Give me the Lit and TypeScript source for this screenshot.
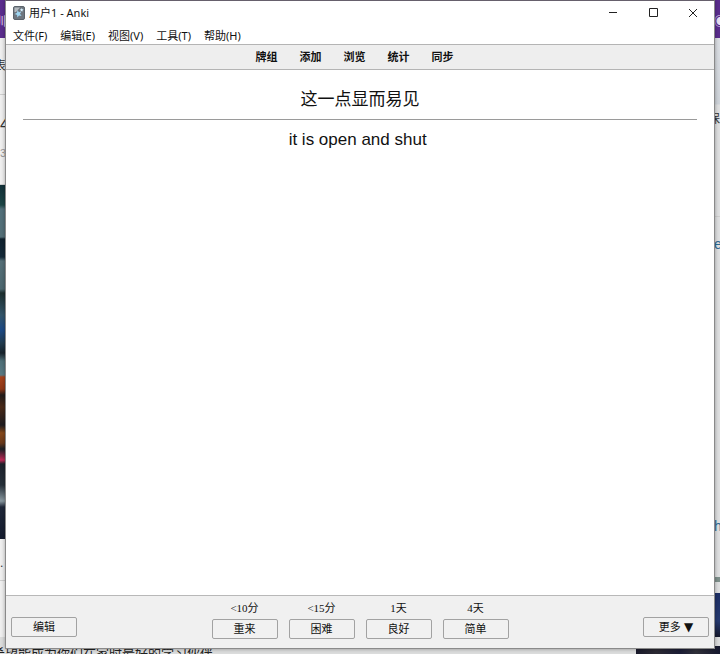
import { LitElement, html, css } from "lit";
import { customElement, property } from "lit/decorators.js";

@customElement("app-backdrop")
export class AppBackdrop extends LitElement {
  static styles = css`
    :host {
      display: block;
      position: absolute;
      inset: 0;
      overflow: hidden;
      background: #dcdddd;
      font-family: "Liberation Sans", "Noto Sans CJK SC", sans-serif;
      white-space: nowrap;
    }
    .columns {
      display: flex;
      justify-content: space-between;
    }
    .strip {
      width: 6px;
      overflow: hidden;
      display: flex;
      flex-direction: column;
      color: #333;
      font-size: 12px;
      line-height: 16px;
    }
    .left {
      background: #f0f0f0;
    }
    .right {
      background: #dfe0e1;
    }
    .brand {
      height: 38px;
      box-sizing: border-box;
      padding-top: 14px;
      background: #5b2d8e;
      color: #e8dff2;
    }
    .tail {
      display: flex;
      justify-content: flex-end;
    }
    .row {
      box-sizing: border-box;
      border-bottom: 1px solid #cfcfcf;
    }
    .nav {
      height: 57px;
      padding-top: 20px;
    }
    .heading {
      height: 90px;
      padding-top: 22px;
      font-size: 17px;
    }
    .muted {
      margin-top: 12px;
      font-size: 11px;
      color: #999;
    }
    .photo {
      height: 354px;
      background: linear-gradient(
        #123038 0, #1d4747 20px, #52707a 24px, #557078 52px, #10222e 54px,
        #142a3a 72px, #567078 76px, #4d6870 104px, #1d3030 108px, #33566a 130px,
        #1c4a86 145px, #223c50 158px, #17232c 168px, #4f7078 176px, #5a7a84 190px,
        #a8431c 192px, #8f3716 204px, #231d1c 210px, #4a2a18 222px, #1e1c20 240px,
        #86491b 248px, #6a3a1c 258px, #1b2026 264px, #c22a58 275px, #1d222c 279px,
        #26303a 300px, #8b9aa2 316px, #20283a 322px, #141c2e 354px
      );
    }
    .below {
      padding-top: 16px;
      height: 42px;
    }
    .rail {
      height: 179px;
      padding-top: 73px;
      background: linear-gradient(#dcdfe4 0, #cfd4da 66px, #dfe0e1 67px);
    }
    .link {
      color: #2c6a96;
      font-size: 14px;
    }
    .gap-a {
      padding-top: 19px;
    }
    .gap-b {
      padding-top: 266px;
      height: 59px;
    }
    .bar {
      height: 5px;
      background: #7f918c;
    }
    .poster {
      margin-top: 11px;
      height: 44px;
      background: linear-gradient(#1d2f66, #263a70 28px, #15182c);
    }
    .footer {
      position: absolute;
      inset: auto 0 0 0;
      height: 8px;
      display: flex;
      justify-content: space-between;
      overflow: hidden;
      font-size: 13px;
      line-height: 16px;
      color: #222;
    }
    .footer-text {
      margin-left: -8px;
    }
    .thumb {
      width: 84px;
      background: linear-gradient(90deg, #1a1a2c, #2c2a33 20px, #1b1d36 44px, #30303a 60px, #16182e);
    }
  `;

  render() {
    return html`
      <div class="columns">
        <div class="strip left">
          <div class="brand tail">训</div>
          <div class="row nav tail">表</div>
          <div class="row heading">4<div class="muted">3</div></div>
          <div class="photo"></div>
          <div class="row below">.&nbsp;.</div>
        </div>
        <div class="strip right">
          <div class="brand">◉</div>
          <div class="row rail tail">保</div>
          <div class="link gap-a">er</div>
          <div class="link gap-b">h</div>
          <div class="bar"></div>
          <div class="poster"></div>
        </div>
      </div>
      <div class="footer">
        <span class="footer-text">希望能成为你们在家时最好的学习伙伴</span>
        <span class="thumb"></span>
      </div>
    `;
  }
}

@customElement("push-button")
export class PushButton extends LitElement {
  @property() label = "";
  @property({ type: Boolean }) menu = false;

  static styles = css`
    :host {
      display: block;
    }
    .button {
      display: block;
      width: 66px;
      height: 20px;
      padding: 0;
      border: 1px solid #a2a2a2;
      border-radius: 2px;
      background: #f1f1f1;
      color: #111;
      font: 11px/16px "Liberation Sans", "Noto Sans CJK SC", sans-serif;
    }
    .button:hover {
      background: #e4eef8;
    }
    .arrow {
      font-family: "DejaVu Sans", sans-serif;
      font-size: 12px;
    }
  `;

  render() {
    return html`<button class="button" type="button">
      ${this.label}${this.menu ? html` <span class="arrow">▼</span>` : ""}
    </button>`;
  }
}

@customElement("app-root")
export class AppRoot extends LitElement {
  private menus = ["文件(F)", "编辑(E)", "视图(V)", "工具(T)", "帮助(H)"];
  private tools = ["牌组", "添加", "浏览", "统计", "同步"];
  private answers = [
    { due: "<10分", label: "重来" },
    { due: "<15分", label: "困难" },
    { due: "1天", label: "良好" },
    { due: "4天", label: "简单" },
  ];

  static styles = css`
    :host {
      display: flex;
      position: relative;
      min-height: 100vh;
      box-sizing: border-box;
      padding: 0 5px 5px 5px;
      overflow: hidden;
      font-family: "Liberation Sans", "Noto Sans CJK SC", sans-serif;
      color: #111;
    }
    .window {
      position: relative;
      flex: 1;
      display: flex;
      flex-direction: column;
      background: #fff;
      border: 1px solid #8a8a8a;
      border-top-color: #66606c;
      box-shadow: 0 0 4px rgba(0, 0, 0, 0.35);
    }
    .titlebar {
      display: flex;
      align-items: center;
      height: 24px;
      padding-left: 7px;
      font: 11px/16px "Noto Sans", "Noto Sans CJK SC", sans-serif;
    }
    .title {
      flex: 1;
      margin: 0 0 0 4px;
      font: inherit;
    }
    .control {
      display: flex;
      justify-content: center;
      width: 40px;
      padding: 0;
      border: 0;
      background: none;
    }
    .menubar {
      display: flex;
      gap: 13px;
      padding: 2px 7px 0;
    }
    .menu {
      padding: 0;
      border: 0;
      background: none;
      color: #111;
      font: 11px/17px "Noto Sans", "Noto Sans CJK SC", sans-serif;
    }
    .toolbar {
      display: flex;
      justify-content: center;
      gap: 22px;
      padding: 0 11px 0 0;
      border: 1px solid #b4b4b4;
      border-width: 1px 0;
      background: #eee;
      font-size: 11px;
      font-weight: 700;
      line-height: 24px;
    }
    .tool {
      color: #111;
      text-decoration: none;
    }
    .card {
      flex: 1;
      padding: 17px;
      text-align: center;
      font-size: 17px;
      line-height: 26px;
    }
    .side {
      margin: 0;
    }
    .divider {
      margin: 6px 0 7px;
      border: 0;
      border-top: 1px solid #9a9a9a;
    }
    .bottombar {
      display: grid;
      grid-template-columns: 1fr auto 1fr;
      padding: 5px 5px 9px;
      border-top: 1px solid #b8b8b8;
      background: #f0f0f0;
    }
    .start,
    .end {
      align-self: end;
      margin-bottom: 2px;
    }
    .end {
      justify-self: end;
    }
    .answers {
      display: flex;
      gap: 11px;
    }
    .answer {
      text-align: center;
    }
    .due {
      font: 11px/14px "Liberation Serif", "Noto Sans CJK SC", serif;
      margin-bottom: 4px;
    }
  `;

  render() {
    return html`
      <app-backdrop aria-hidden="true"></app-backdrop>
      <main class="window">
        <header class="titlebar">
          <svg width="12" height="14" viewBox="0 0 12 14" aria-hidden="true">
            <rect x="0.5" y="0.5" width="11" height="13" rx="1.5" fill="#6f7780" stroke="#5b636b" />
            <path d="M1.500 1.500h5.500l-4 4.500h-1.500z" fill="#b4babf" />
            <path d="M4.500 4l1.400 2.200 2.600-.6-1.500 2.200 1.600 2.200-2.600-.5-1.600 2-.3-2.600-2.400-1 2.300-1.100z" fill="#9fd6f2" />
            <path d="M8.800 2l.5 1.200 1.300.1-1 .9.200 1.300-1.100-.6-1.200.5.3-1.300-.8-1 1.300-.1z" fill="#d5effc" />
          </svg>
          <h1 class="title">用户1 - Anki</h1>
          <button class="control" type="button" aria-label="最小化">
            <svg width="10" height="10" viewBox="0 0 10 10"><path d="M0 4.500h8" stroke="#222" /></svg>
          </button>
          <button class="control" type="button" aria-label="最大化">
            <svg width="10" height="10" viewBox="0 0 10 10"><path d="M.5 .5h8v8h-8z" fill="none" stroke="#222" /></svg>
          </button>
          <button class="control" type="button" aria-label="关闭">
            <svg width="10" height="10" viewBox="0 0 10 10"><path d="M0 1l8 8M8 1l-8 8" stroke="#222" /></svg>
          </button>
        </header>
        <nav class="menubar">
          ${this.menus.map((m) => html`<button class="menu" type="button">${m}</button>`)}
        </nav>
        <nav class="toolbar">
          ${this.tools.map((t) => html`<a class="tool" href="#">${t}</a>`)}
        </nav>
        <section class="card">
          <p class="side">这一点显而易见</p>
          <hr class="divider" />
          <p class="side">it is open and shut&nbsp;</p>
        </section>
        <footer class="bottombar">
          <push-button class="start" label="编辑"></push-button>
          <div class="answers">
            ${this.answers.map(
              (a) => html`
                <div class="answer">
                  <div class="due">${a.due}</div>
                  <push-button label=${a.label}></push-button>
                </div>
              `,
            )}
          </div>
          <push-button class="end" label="更多" menu></push-button>
        </footer>
      </main>
    `;
  }
}
